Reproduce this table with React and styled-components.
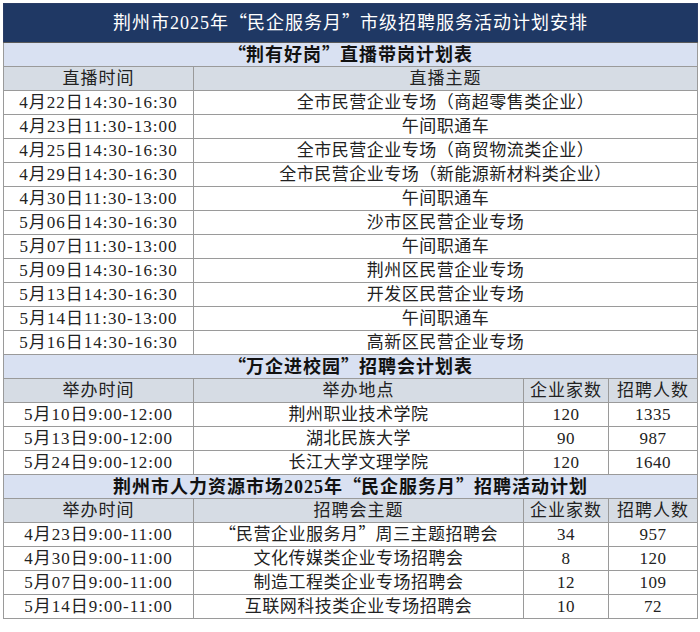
import React from 'react'
import styled, { createGlobalStyle } from 'styled-components'

const GlobalStyle = createGlobalStyle`
    body {
        margin: 0;
        padding: 3px;
        background: #ffffff;
        font-family: "Liberation Serif", "Noto Sans CJK SC", serif;
    }
`;

const liveRows = [
    ['4月22日14:30-16:30', '全市民营企业专场（商超零售类企业）'],
    ['4月23日11:30-13:00', '午间职通车'],
    ['4月25日14:30-16:30', '全市民营企业专场（商贸物流类企业）'],
    ['4月29日14:30-16:30', '全市民营企业专场（新能源新材料类企业）'],
    ['4月30日11:30-13:00', '午间职通车'],
    ['5月06日14:30-16:30', '沙市区民营企业专场'],
    ['5月07日11:30-13:00', '午间职通车'],
    ['5月09日14:30-16:30', '荆州区民营企业专场'],
    ['5月13日14:30-16:30', '开发区民营企业专场'],
    ['5月14日11:30-13:00', '午间职通车'],
    ['5月16日14:30-16:30', '高新区民营企业专场'],
]

const campusRows = [
    ['5月10日9:00-12:00', '荆州职业技术学院', '120', '1335'],
    ['5月13日9:00-12:00', '湖北民族大学', '90', '987'],
    ['5月24日9:00-12:00', '长江大学文理学院', '120', '1640'],
]

const marketRows = [
    ['4月23日9:00-11:00', '“民营企业服务月”周三主题招聘会', '34', '957'],
    ['4月30日9:00-11:00', '文化传媒类企业专场招聘会', '8', '120'],
    ['5月07日9:00-11:00', '制造工程类企业专场招聘会', '12', '109'],
    ['5月14日9:00-11:00', '互联网科技类企业专场招聘会', '10', '72'],
]

// quotes in CJK width, like the sheet's Song font
const withQuotes = (text) => text.split(/([“”])/).map((part, i) =>
    part === '“' || part === '”' ? <Quote key={i}>{part}</Quote> : part
)

const App = () => {

    const renderRows = (rows) => rows.map((row, index) => (
        <tr key={index}>
            <Time>{row[0]}</Time>
            <Cell>{withQuotes(row[1])}</Cell>
            <Cell>{row[2]}</Cell>
            <Cell>{row[3]}</Cell>
        </tr>
    ))

    return (
        <>
            <GlobalStyle />
            <Sheet>
                <colgroup>
                    <col style={{ width: 190 }} />
                    <col style={{ width: 330 }} />
                    <col style={{ width: 85 }} />
                    <col style={{ width: 89 }} />
                </colgroup>
                <tbody>
                    <tr>
                        <Title colSpan={4}>{withQuotes('荆州市2025年“民企服务月”市级招聘服务活动计划安排')}</Title>
                    </tr>

                    <tr><Section colSpan={4}>{withQuotes('“荆有好岗”直播带岗计划表')}</Section></tr>
                    <tr>
                        <Head>直播时间</Head>
                        <Head colSpan={3}>直播主题</Head>
                    </tr>
                    {liveRows.map((row, index) => (
                        <tr key={index}>
                            <Time>{row[0]}</Time>
                            <Cell colSpan={3}>{row[1]}</Cell>
                        </tr>
                    ))}

                    <tr><Section colSpan={4}>{withQuotes('“万企进校园”招聘会计划表')}</Section></tr>
                    <tr>
                        <Head>举办时间</Head>
                        <Head>举办地点</Head>
                        <Head>企业家数</Head>
                        <Head>招聘人数</Head>
                    </tr>
                    {renderRows(campusRows)}

                    <tr><Section colSpan={4}>{withQuotes('荆州市人力资源市场2025年“民企服务月”招聘活动计划')}</Section></tr>
                    <tr>
                        <Head>举办时间</Head>
                        <Head>招聘会主题</Head>
                        <Head>企业家数</Head>
                        <Head>招聘人数</Head>
                    </tr>
                    {renderRows(marketRows)}
                </tbody>
            </Sheet>
        </>
    )
};

export default App;


const Sheet = styled.table`
    width: 694px;
    border-collapse: collapse;
    table-layout: fixed;
    border: 1px solid #6b6b6b;
    color: #222222;
    font-size: 17px;
`;

const Cell = styled.td`
    height: 23px;
    padding: 0;
    line-height: 22px;
    text-align: center;
    white-space: nowrap;
    letter-spacing: 0.5px;
    border: 1px solid #9a9a9a;
`;

const Time = styled(Cell)`
    letter-spacing: 1px;
`;

const Head = styled(Cell)`
    background: #d6dce4;
    letter-spacing: 1px;
`;

const Section = styled(Cell)`
    background: #d9e1f2;
    color: #111111;
    font-weight: bold;
    font-size: 18px;
    letter-spacing: 1px;
`;

const Title = styled(Cell)`
    height: 38px;
    background: #1f3864;
    color: #ffffff;
    font-size: 18px;
    letter-spacing: 1px;
    border-color: #2a3d66 #2a3d66 #5a5a5a;
`;

const Quote = styled.span`
    font-family: "Noto Sans CJK SC", sans-serif;
    line-height: 1;
    letter-spacing: 0;
`;
